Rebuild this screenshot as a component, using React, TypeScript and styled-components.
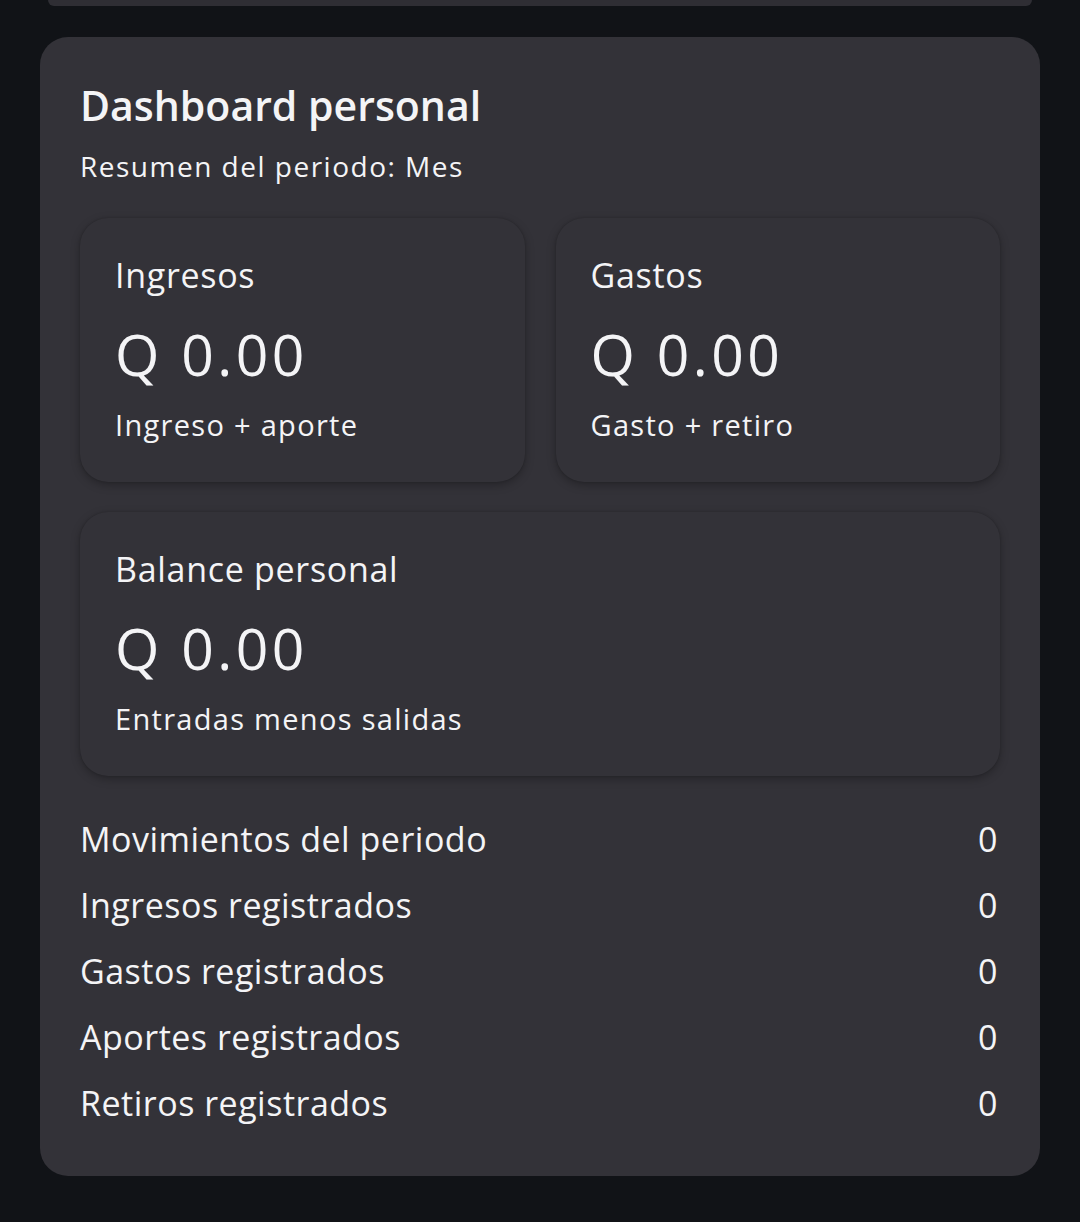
import styled, { createGlobalStyle } from 'styled-components';

const GlobalStyle = createGlobalStyle`
  html, body {
    margin: 0;
    padding: 0;
    background: #111317;
  }
  body {
    font-family: "Open Sans", "Noto Sans", sans-serif;
    color: #f4f4f6;
  }
`;

const Page = styled.div`
  min-height: 1222px;
  background: #111317;
  display: flex;
  flex-direction: column;
  gap: 31px;
`;

const PrevCardEdge = styled.div`
  height: 6px;
  margin: 0 48px;
  background: #2f2e34;
  border-radius: 0 0 22px 22px;
`;

const Panel = styled.section`
  margin: 0 40px;
  padding: 44px 40px 40px;
  background: #333238;
  border-radius: 28px;
  display: flex;
  flex-direction: column;
`;

const Title = styled.h2`
  margin: 0;
  font-size: 41px;
  line-height: 48px;
  font-weight: 600;
`;

const Subtitle = styled.p`
  margin: 19px 0 0;
  font-size: 28px;
  line-height: 36px;
  font-weight: 500;
  letter-spacing: 1.5px;
`;

const CardGrid = styled.div`
  margin-top: 34px;
  display: grid;
  grid-template-columns: 1fr 1fr;
  gap: 30px 31px;
`;

const StatCard = styled.div<{ $wide?: boolean }>`
  grid-column: ${(p) => (p.$wide ? '1 / -1' : 'auto')};
  height: 264px;
  box-sizing: border-box;
  padding: 35px 35px 38px;
  background: #333238;
  border-radius: 28px;
  box-shadow: 0 3px 10px rgba(0, 0, 0, 0.28), 0 0 2px rgba(0, 0, 0, 0.2);
  display: flex;
  flex-direction: column;
`;

const CardLabel = styled.div`
  font-size: 34px;
  line-height: 44px;
  font-weight: 400;
  letter-spacing: 0.7px;
`;

const Amount = styled.div`
  margin-top: 25px;
  font-size: 57px;
  line-height: 64px;
  font-weight: 500;
  letter-spacing: 3.5px;
`;

const CardNote = styled.div`
  margin-top: 20px;
  font-size: 29px;
  line-height: 38px;
  font-weight: 400;
  letter-spacing: 1.3px;
`;

const StatList = styled.ul`
  margin: 30px 0 0;
  padding: 0;
  list-style: none;
`;

const StatRow = styled.li`
  height: 66px;
  display: flex;
  align-items: center;
  justify-content: space-between;
  font-size: 34px;
  line-height: 44px;
  letter-spacing: 0.5px;
`;

const StatValue = styled.span`
  padding-right: 2px;
`;

const cards = [
  { label: 'Ingresos', amount: 'Q 0.00', note: 'Ingreso + aporte' },
  { label: 'Gastos', amount: 'Q 0.00', note: 'Gasto + retiro' },
  { label: 'Balance personal', amount: 'Q 0.00', note: 'Entradas menos salidas', wide: true },
];

const rows = [
  { label: 'Movimientos del periodo', value: 0 },
  { label: 'Ingresos registrados', value: 0 },
  { label: 'Gastos registrados', value: 0 },
  { label: 'Aportes registrados', value: 0 },
  { label: 'Retiros registrados', value: 0 },
];

export default function App() {
  return (
    <>
      <GlobalStyle />
      <Page>
        <PrevCardEdge />
        <Panel>
          <Title>Dashboard personal</Title>
          <Subtitle>Resumen del periodo: Mes</Subtitle>
          <CardGrid>
            {cards.map((card) => (
              <StatCard key={card.label} $wide={card.wide}>
                <CardLabel>{card.label}</CardLabel>
                <Amount>{card.amount}</Amount>
                <CardNote>{card.note}</CardNote>
              </StatCard>
            ))}
          </CardGrid>
          <StatList>
            {rows.map((row) => (
              <StatRow key={row.label}>
                <span>{row.label}</span>
                <StatValue>{row.value}</StatValue>
              </StatRow>
            ))}
          </StatList>
        </Panel>
      </Page>
    </>
  );
}
